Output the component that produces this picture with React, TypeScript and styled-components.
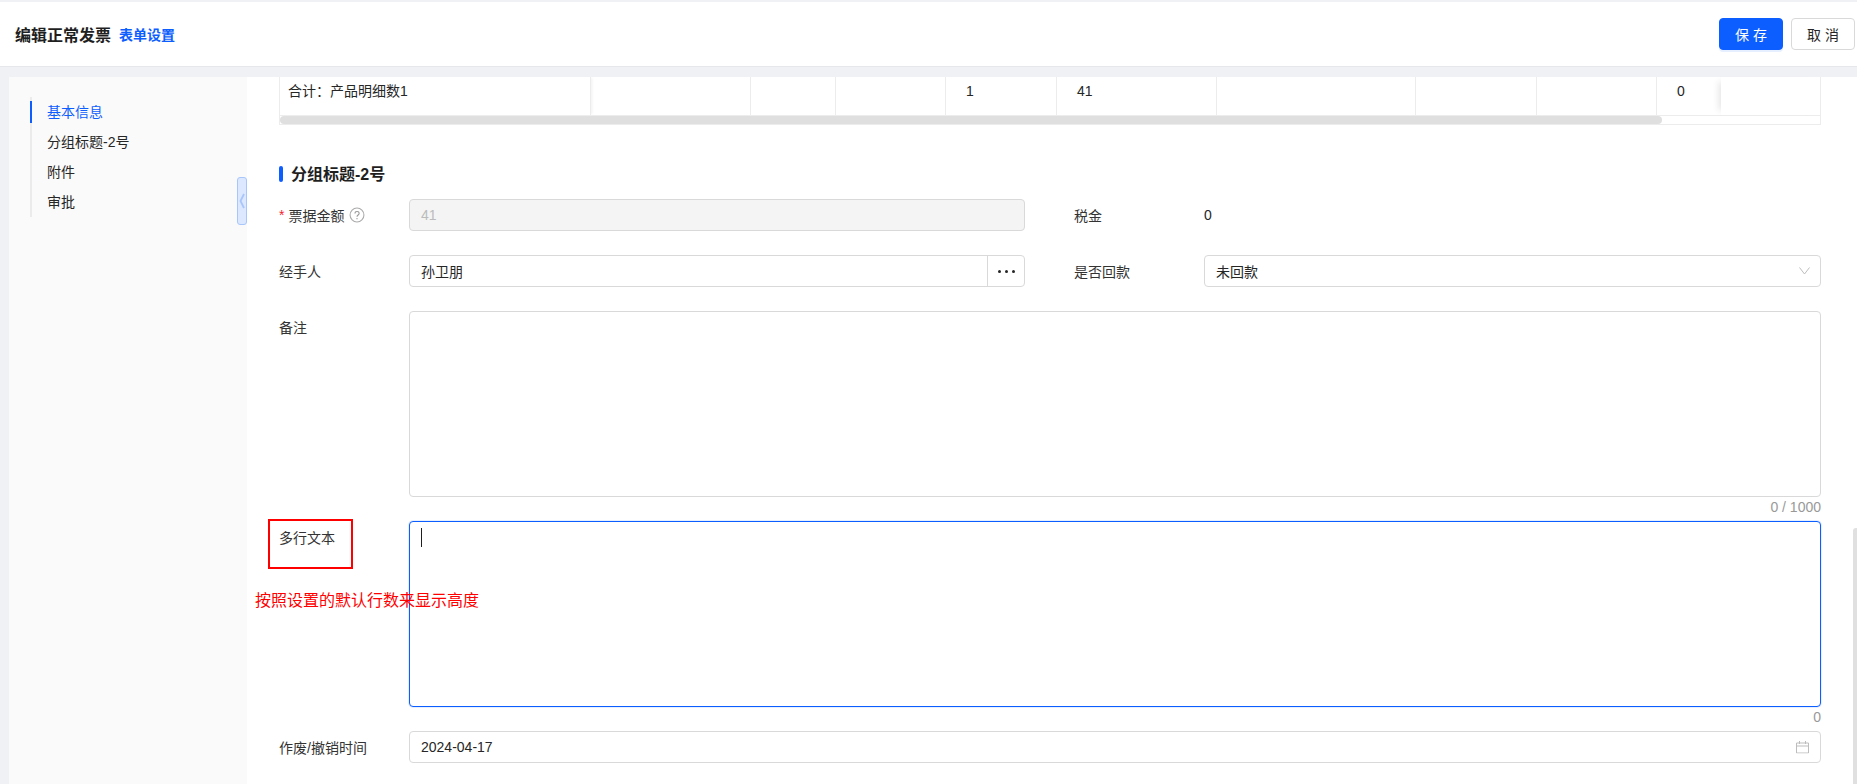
import styled, { createGlobalStyle } from "styled-components";

const COLUMN_WIDTHS = [311, 160, 85, 110, 111, 160, 199, 121, 120, 64, 100];
const TOTAL_ROW = ["合计：产品明细数1", "", "", "", "1", "41", "", "", "", "0", ""];
const NAV_ITEMS = ["基本信息", "分组标题-2号", "附件", "审批"];

export default function App() {
  return (
    <Page>
      <GlobalStyle />
      <Header>
        <TitleGroup>
          <PageTitle>编辑正常发票</PageTitle>
          <SettingLink>表单设置</SettingLink>
        </TitleGroup>
        <Actions>
          <Button type="button" $primary>
            保存
          </Button>
          <Button type="button">取消</Button>
        </Actions>
      </Header>

      <Body>
        <Sidebar>
          <Nav>
            {NAV_ITEMS.map((item, index) => (
              <NavItem key={item} $active={index === 0}>
                {item}
              </NavItem>
            ))}
          </Nav>
          <CollapseHandle>
            <svg width="6" height="16" viewBox="0 0 6 16" fill="none">
              <path d="M5 1 L1.5 8 L5 15" stroke="#a9c6fb" strokeWidth="1.8" />
            </svg>
          </CollapseHandle>
        </Sidebar>

        <Main>
          <Table>
            <TableRow>
              {TOTAL_ROW.map((value, index) => (
                <Cell
                  key={index}
                  $width={COLUMN_WIDTHS[index]}
                  $first={index === 0}
                  $beforeFixed={index === 9}
                  $fixed={index === 10}
                >
                  {value}
                </Cell>
              ))}
            </TableRow>
            <ScrollTrack>
              <ScrollThumb />
            </ScrollTrack>
          </Table>

          <SectionTitle>分组标题-2号</SectionTitle>

          <FormRow>
            <Field>
              <Label>
                <Required>*</Required>票据金额
                <HelpIcon width="16" height="16" viewBox="0 0 15 15" fill="none">
                  <circle cx="7.5" cy="7.5" r="6.5" stroke="#aaa" />
                  <path d="M5.6 6 C5.6 3.6 9.5 3.6 9.5 6 C9.5 7.5 7.5 7.5 7.5 9.2" stroke="#999" />
                  <path d="M7.5 10.4 V11.6" stroke="#999" />
                </HelpIcon>
              </Label>
              <Input $disabled defaultValue="41" disabled />
            </Field>
            <Field>
              <Label>税金</Label>
              <PlainValue>0</PlainValue>
            </Field>
          </FormRow>

          <FormRow>
            <Field>
              <Label>经手人</Label>
              <InputGroup>
                <GroupInput defaultValue="孙卫朋" readOnly />
                <DotsButton type="button">
                  <Dot />
                  <Dot />
                  <Dot />
                </DotsButton>
              </InputGroup>
            </Field>
            <Field>
              <Label>是否回款</Label>
              <InputWrap>
                <Input defaultValue="未回款" readOnly />
                <TrailingIcon $right={11} width="11" height="8" viewBox="0 0 11 8" fill="none">
                  <path d="M0.5 0.5 L5.5 7 L10.5 0.5" stroke="#bdbdbd" />
                </TrailingIcon>
              </InputWrap>
            </Field>
          </FormRow>

          <FormRow $tight>
            <Field $wide>
              <Label>备注</Label>
              <FieldStack>
                <TextArea />
                <Counter>0 / 1000</Counter>
              </FieldStack>
            </Field>
          </FormRow>

          <FormRow $tight>
            <Field $wide>
              <Label>
                多行文本
                <RedBox />
                <Annotation>按照设置的默认行数来显示高度</Annotation>
              </Label>
              <FieldStack>
                <InputWrap>
                  <TextArea $focused />
                  <Caret />
                </InputWrap>
                <Counter>0</Counter>
              </FieldStack>
            </Field>
          </FormRow>

          <FormRow>
            <Field $wide>
              <Label>作废/撤销时间</Label>
              <InputWrap>
                <Input defaultValue="2024-04-17" readOnly />
                <TrailingIcon $right={12} width="13" height="13" viewBox="0 0 13 13" fill="none">
                  <path d="M0.5 2.5 H12.5 V12.5 H0.5 Z M0.5 5.5 H12.5 M3.5 0.5 V3.5 M9.5 0.5 V3.5" stroke="#bdbdbd" />
                </TrailingIcon>
              </InputWrap>
            </Field>
          </FormRow>
        </Main>
      </Body>

      <PageScrollbar />
    </Page>
  );
}

const GlobalStyle = createGlobalStyle`
  html, body {
    margin: 0;
    padding: 0;
    height: 100%;
    overflow: hidden;
  }

  * {
    box-sizing: border-box;
  }

  body, input, textarea, button {
    font-family: "Liberation Sans", "Noto Sans CJK SC", sans-serif;
  }
`;

const Page = styled.div`
  position: relative;
  display: flex;
  flex-direction: column;
  width: 1857px;
  height: 784px;
  padding-top: 2px;
  overflow: hidden;
  font-size: 14px;
  color: #262626;
  background-color: #f0f1f5;
`;

const Header = styled.header`
  display: flex;
  align-items: center;
  justify-content: space-between;
  flex-shrink: 0;
  height: 65px;
  padding: 0 2px 0 15px;
  background-color: #fff;
  border-bottom: 1px solid #e6e7eb;
`;

const TitleGroup = styled.div`
  display: flex;
  align-items: center;
  gap: 8px;
`;

const PageTitle = styled.h1`
  margin: 0;
  font-size: 16px;
  font-weight: 700;
  color: #1f1f1f;
`;

const SettingLink = styled.a`
  font-size: 14px;
  font-weight: 700;
  color: #0d5eff;
`;

const Actions = styled.div`
  display: flex;
  gap: 8px;
`;

const Button = styled.button<{ $primary?: boolean }>`
  width: 64px;
  height: 32px;
  padding: 0 0 0 4px;
  font-size: 14px;
  letter-spacing: 4px;
  border-radius: 4px;
  border: 1px solid ${({ $primary }) => ($primary ? "#0d5eff" : "#d9d9d9")};
  color: ${({ $primary }) => ($primary ? "#fff" : "#262626")};
  background-color: ${({ $primary }) => ($primary ? "#0d5eff" : "#fff")};
  box-shadow: ${({ $primary }) => ($primary ? "0 2px 0 #e6efff" : "none")};
`;

const Body = styled.div`
  display: flex;
  flex: 1;
  min-height: 0;
  margin-top: 10px;
  padding-left: 9px;
`;

const Sidebar = styled.aside`
  position: relative;
  flex-shrink: 0;
  width: 238px;
  padding: 20px 0 0 21px;
  background-color: #fafafa;
`;

const Nav = styled.nav`
  display: flex;
  flex-direction: column;
  border-left: 2px solid #ebebeb;
`;

const NavItem = styled.div<{ $active?: boolean }>`
  position: relative;
  height: 30px;
  padding-left: 15px;
  line-height: 30px;
  color: ${({ $active }) => ($active ? "#0d5eff" : "#262626")};

  &::before {
    content: "";
    display: ${({ $active }) => ($active ? "block" : "none")};
    position: absolute;
    left: -2px;
    top: 4px;
    width: 2px;
    height: 22px;
    background-color: #0d5eff;
  }
`;

const CollapseHandle = styled.div`
  position: absolute;
  right: 0;
  top: 100px;
  display: flex;
  align-items: center;
  justify-content: center;
  width: 10px;
  height: 48px;
  background-color: #dbe8ff;
  border: 1px solid #a9c6fb;
  border-radius: 3px;
`;

const Main = styled.main`
  flex: 1;
  min-width: 0;
  padding: 0 36px 0 32px;
  background-color: #fff;
`;

const Table = styled.div`
  border-left: 1px solid #ececec;
  border-right: 1px solid #ececec;
  border-bottom: 1px solid #ececec;
`;

const TableRow = styled.div`
  display: flex;
  height: 39px;
  border-bottom: 1px solid #ececec;
`;

const Cell = styled.div<{ $width: number; $first?: boolean; $beforeFixed?: boolean; $fixed?: boolean }>`
  flex: ${({ $fixed }) => ($fixed ? "1" : "none")};
  width: ${({ $width }) => $width}px;
  padding: 0 0 0 ${({ $first }) => ($first ? "8px" : "20px")};
  line-height: 29px;
  white-space: nowrap;
  border-right: ${({ $fixed, $beforeFixed }) => ($fixed || $beforeFixed ? "none" : "1px solid #ececec")};
  box-shadow: ${({ $fixed, $first }) =>
    $fixed ? "-7px 0 7px -5px #e4e4e4" : $first ? "2px 0 3px -1px #f0f0f0" : "none"};
`;

const ScrollTrack = styled.div`
  height: 8px;
`;

const ScrollThumb = styled.div`
  width: 1382px;
  height: 8px;
  background-color: #dfdfdf;
  border-radius: 4px;
`;

const SectionTitle = styled.h2`
  position: relative;
  margin: 38px 0 12px;
  padding-left: 12px;
  font-size: 16px;
  font-weight: 700;
  line-height: 24px;
  color: #1f1f1f;

  &::before {
    content: "";
    position: absolute;
    left: 0;
    top: 3px;
    width: 4px;
    height: 16px;
    background-color: #0d5eff;
    border-radius: 2px;
  }
`;

const FormRow = styled.div<{ $tight?: boolean }>`
  display: grid;
  grid-template-columns: 746px 1fr;
  column-gap: 49px;
  margin-bottom: ${({ $tight }) => ($tight ? "4px" : "24px")};
`;

const Field = styled.div<{ $wide?: boolean }>`
  display: flex;
  grid-column: ${({ $wide }) => ($wide ? "1 / -1" : "auto")};
  align-items: ${({ $wide }) => ($wide ? "flex-start" : "center")};
`;

const Label = styled.label`
  position: relative;
  display: flex;
  align-items: center;
  flex-shrink: 0;
  width: 130px;
  height: 32px;
  color: #333;
`;

const Required = styled.span`
  margin-right: 4px;
  color: #f5222d;
`;

const HelpIcon = styled.svg`
  margin-left: 5px;
`;

const RedBox = styled.span`
  position: absolute;
  left: -11px;
  top: -2px;
  width: 85px;
  height: 50px;
  border: 2px solid #ff0000;
`;

const Annotation = styled.span`
  position: absolute;
  left: -24px;
  top: 68px;
  z-index: 2;
  font-size: 16px;
  line-height: 24px;
  white-space: nowrap;
  color: #ff0000;
`;

const Input = styled.input<{ $disabled?: boolean }>`
  width: 100%;
  height: 32px;
  padding: 0 11px;
  font-size: 14px;
  color: ${({ $disabled }) => ($disabled ? "#bbb" : "#262626")};
  background-color: ${({ $disabled }) => ($disabled ? "#f4f4f4" : "#fff")};
  border: 1px solid #d9d9d9;
  border-radius: 4px;
  outline: none;
`;

const InputWrap = styled.div`
  position: relative;
  flex: 1;
  display: flex;
`;

const TrailingIcon = styled.svg<{ $right: number }>`
  position: absolute;
  right: ${({ $right }) => $right}px;
  top: 50%;
  transform: translateY(-50%);
`;

const InputGroup = styled.div`
  display: flex;
  flex: 1;
  height: 32px;
  border: 1px solid #d9d9d9;
  border-radius: 4px;
`;

const GroupInput = styled.input`
  flex: 1;
  min-width: 0;
  padding: 0 11px;
  font-size: 14px;
  color: #262626;
  background: transparent;
  border: none;
  outline: none;
`;

const DotsButton = styled.button`
  display: flex;
  align-items: center;
  justify-content: center;
  gap: 4px;
  width: 37px;
  padding: 0;
  background: transparent;
  border: none;
  border-left: 1px solid #d9d9d9;
`;

const Dot = styled.span`
  width: 3px;
  height: 3px;
  background-color: #262626;
  border-radius: 50%;
`;

const PlainValue = styled.span`
  color: #262626;
`;

const FieldStack = styled.div`
  display: flex;
  flex: 1;
  flex-direction: column;
`;

const TextArea = styled.textarea<{ $focused?: boolean }>`
  display: block;
  width: 100%;
  height: 186px;
  padding: 5px 11px;
  font-size: 14px;
  resize: none;
  outline: none;
  border: 1px solid ${({ $focused }) => ($focused ? "#0d5eff" : "#d9d9d9")};
  border-radius: 4px;
  box-shadow: ${({ $focused }) => ($focused ? "0 0 0 1px #e6efff" : "none")};
`;

const Caret = styled.span`
  position: absolute;
  left: 12px;
  top: 7px;
  width: 1px;
  height: 19px;
  background-color: #1f1f1f;
`;

const Counter = styled.div`
  height: 20px;
  font-size: 14px;
  line-height: 20px;
  text-align: right;
  color: #999;
`;

const PageScrollbar = styled.div`
  position: absolute;
  right: 0;
  top: 528px;
  bottom: 0;
  width: 4px;
  background-color: #e0e0e0;
  border-radius: 3px 0 0 0;
`;
